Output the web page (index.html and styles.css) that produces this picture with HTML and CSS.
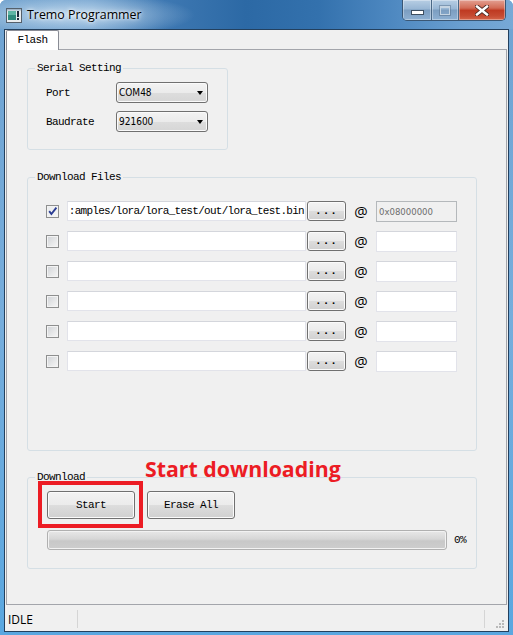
FILE: index.html
```html
<!DOCTYPE html>
<html>
<head>
<meta charset="utf-8">
<title>Tremo Programmer</title>
<link rel="stylesheet" href="styles.css">
</head>
<body>
<div class="window">
  <div class="titlebar">
    <svg class="appicon" width="16" height="15" viewBox="0 0 16 15">
      <rect x="0.5" y="0.5" width="15" height="14" fill="#e8ecef" stroke="#55606b"/>
      <rect x="2" y="3" width="8" height="9" fill="#2f8a7c"/>
      <rect x="2" y="3" width="8" height="4" fill="#5fb5a4"/>
      <rect x="11" y="3" width="2" height="6" fill="#1d2a3a"/>
      <rect x="11" y="10" width="2" height="2" fill="#1d2a3a"/>
      <rect x="1" y="1" width="14" height="1.5" fill="#9fb3c6"/>
    </svg>
    <span class="title">Tremo Programmer</span>
    <div class="caption">
      <div class="cbtn cmin"><span class="g-min"></span></div>
      <div class="cbtn cmax"><span class="g-max"></span></div>
      <div class="cbtn cclose">
        <svg width="14" height="11" viewBox="0 0 14 11">
          <path d="M2 1.5 L12 9.5 M12 1.5 L2 9.5" stroke="#4a2a25" stroke-width="4.2" stroke-linecap="square"/>
          <path d="M2 1.5 L12 9.5 M12 1.5 L2 9.5" stroke="#ffffff" stroke-width="2.4" stroke-linecap="square"/>
        </svg>
      </div>
    </div>
  </div>
  <div class="frame">
    <div class="client">
      <div class="tabs"><div class="tab">Flash</div></div>
      <div class="pane">
        <fieldset class="group serial">
          <legend>Serial Setting</legend>
          <div class="serial-body">
            <span class="lbl">Port</span>
            <div class="combo">COM48</div>
            <span class="lbl">Baudrate</span>
            <div class="combo">921600</div>
          </div>
        </fieldset>

        <fieldset class="group files">
          <legend>Download Files</legend>
          <div class="files-body">
            <div class="frow">
              <span class="chk on"><svg width="11" height="11" viewBox="0 0 11 11"><path d="M2.2 5.2 L4.4 8 L9.4 1.6" fill="none" stroke="#2b3d93" stroke-width="1.9"/></svg></span>
              <div class="field path"><span>:amples/lora/lora_test/out/lora_test.bin</span></div>
              <div class="btn dots">...</div>
              <span class="at">@</span>
              <div class="field addr disabled">0x08000000</div>
            </div>
            <div class="frow">
              <span class="chk"></span>
              <div class="field path"></div>
              <div class="btn dots">...</div>
              <span class="at">@</span>
              <div class="field addr"></div>
            </div>
            <div class="frow">
              <span class="chk"></span>
              <div class="field path"></div>
              <div class="btn dots">...</div>
              <span class="at">@</span>
              <div class="field addr"></div>
            </div>
            <div class="frow">
              <span class="chk"></span>
              <div class="field path"></div>
              <div class="btn dots">...</div>
              <span class="at">@</span>
              <div class="field addr"></div>
            </div>
            <div class="frow">
              <span class="chk"></span>
              <div class="field path"></div>
              <div class="btn dots">...</div>
              <span class="at">@</span>
              <div class="field addr"></div>
            </div>
            <div class="frow">
              <span class="chk"></span>
              <div class="field path"></div>
              <div class="btn dots">...</div>
              <span class="at">@</span>
              <div class="field addr"></div>
            </div>
          </div>
        </fieldset>

        <fieldset class="group download">
          <legend>Download</legend>
          <div class="dl-body">
            <div class="dl-buttons">
              <div class="start-wrap">
                <div class="btn big">Start</div>
                <span class="redbox"></span>
              </div>
              <div class="btn big">Erase All</div>
            </div>
            <div class="progress-row">
              <div class="progress"></div>
              <span class="pct">0%</span>
            </div>
          </div>
        </fieldset>

        <div class="annot">Start downloading</div>
      </div>
      <div class="statusbar">
        <span class="sb-idle">IDLE</span>
        <span class="sb-sep"></span>
        <span class="sb-fill"></span>
        <span class="sb-sep"></span>
        <svg class="grip" width="10" height="10" viewBox="0 0 10 10">
          <g fill="#b9b9b9">
            <rect x="7" y="1" width="2" height="2"/>
            <rect x="4" y="4" width="2" height="2"/><rect x="7" y="4" width="2" height="2"/>
            <rect x="1" y="7" width="2" height="2"/><rect x="4" y="7" width="2" height="2"/><rect x="7" y="7" width="2" height="2"/>
          </g>
        </svg>
      </div>
    </div>
  </div>
</div>
</body>
</html>
```

FILE: styles.css
```css
html, body {
  margin: 0;
  padding: 0;
}
body {
  width: 513px;
  height: 635px;
  overflow: hidden;
  background: #ffffff;
}
.window {
  width: 513px;
  height: 635px;
  display: flex;
  flex-direction: column;
  border-radius: 6px 6px 0 0;
  overflow: hidden;
  background: linear-gradient(180deg, #6fa3d2 0%, #76addc 50%, #5aa7e0 100%);
}

/* ---------- title bar ---------- */
.titlebar {
  height: 29px;
  flex: none;
  display: flex;
  align-items: flex-start;
  position: relative;
  background:
    radial-gradient(ellipse 120px 22px at 75px 15px, rgba(220, 236, 248, 0.75), rgba(220, 236, 248, 0) 100%),
    linear-gradient(90deg, #6d9fcc 0%, #6a9ccb 18%, #3e78b2 32%, #2c69a5 48%, #3371ad 62%, #4b86bf 75%, #6a9fd0 90%, #77a9d6 100%);
}
.appicon {
  margin: 8px 0 0 6px;
  flex: none;
}
.title {
  margin: 6px 0 0 5px;
  font-family: "Open Sans", "Noto Sans", sans-serif;
  font-size: 12.4px;
  line-height: 17px;
  color: #000;
  text-shadow: 0 0 6px #ffffff, 0 0 3px rgba(255, 255, 255, 0.9);
}
.caption {
  margin-left: auto;
  margin-right: 7px;
  display: flex;
  height: 20px;
  border: 1px solid #3a5775;
  border-top: none;
  border-radius: 0 0 5px 5px;
  overflow: hidden;
}
.cbtn {
  height: 20px;
  display: flex;
  align-items: center;
  justify-content: center;
  box-shadow: inset 0 0 0 1px rgba(255, 255, 255, 0.35);
}
.cmin {
  width: 28px;
  border-right: 1px solid #4a6886;
  background: linear-gradient(180deg, #b7cee4 0%, #98b6d4 45%, #7b9dc0 50%, #8eb0d2 100%);
}
.cmax {
  width: 26px;
  border-right: 1px solid #4a6886;
  background: linear-gradient(180deg, #b7cee4 0%, #98b6d4 45%, #7b9dc0 50%, #8eb0d2 100%);
}
.cclose {
  width: 46px;
  background: linear-gradient(180deg, #e3a092 0%, #d26b55 40%, #bf3a22 52%, #c64b32 80%, #d5664b 100%);
}
.g-min {
  display: block;
  width: 11px;
  height: 3px;
  margin-top: 5px;
  background: #fff;
  border: 1px solid #3d4e60;
}
.g-max {
  display: block;
  width: 8px;
  height: 6px;
  border: 1px solid #c5d4e2;
  border-top-width: 2px;
  box-shadow: 0 0 0 1px rgba(80, 105, 130, 0.45);
}

/* ---------- frame / client ---------- */
.frame {
  flex: 1;
  padding: 0 4px 3px;
  display: flex;
  flex-direction: column;
}
.client {
  flex: 1;
  border: 1px solid #23405e;
  background: #f0f0f0;
  display: flex;
  flex-direction: column;
}
.tabs {
  height: 19px;
  flex: none;
  padding-left: 1px;
  display: flex;
}
.tab {
  position: relative;
  z-index: 1;
  box-sizing: border-box;
  width: 53px;
  height: 20px;
  border: 1px solid #898c95;
  border-bottom: none;
  border-radius: 2px 2px 0 0;
  background: #ffffff;
  text-align: center;
  font-family: "Liberation Mono", "DejaVu Sans Mono", monospace;
  font-size: 11px;
  letter-spacing: -0.6px;
  line-height: 19px;
  color: #000;
}
.pane {
  position: relative;
  flex: 1;
  margin: 0 1px 1px;
  border: 1px solid #a3a5ab;
  padding: 0 0 0 20px;
  display: flex;
  flex-direction: column;
  align-items: flex-start;
}

/* ---------- group boxes ---------- */
.group {
  margin: 0;
  padding: 0 0 0 7px;
  border: 1px solid #d5dfe5;
  border-radius: 3px;
  box-sizing: border-box;
  min-inline-size: 0;
}
.group legend {
  padding: 0 2px;
  font-family: "Liberation Mono", "DejaVu Sans Mono", monospace;
  font-size: 11px;
  letter-spacing: -0.6px;
  line-height: 12px;
  color: #000;
}
.serial {
  width: 201px;
  margin-top: 12px;
}
.serial-body {
  display: grid;
  grid-template-columns: 70px 92px;
  row-gap: 8px;
  align-items: center;
  padding: 8px 0 17px 11px;
}
.lbl {
  font-family: "Liberation Mono", "DejaVu Sans Mono", monospace;
  font-size: 11px;
  letter-spacing: -0.6px;
  color: #000;
}
.combo {
  position: relative;
  box-sizing: border-box;
  height: 21px;
  border: 1px solid #707070;
  border-radius: 3px;
  background: linear-gradient(180deg, #f3f3f3 0%, #ebebeb 50%, #dddddd 51%, #d6d6d6 100%);
  box-shadow: inset 0 0 0 1px #fafafa;
  padding-left: 2px;
  font-family: "DejaVu Sans Condensed", "Liberation Sans Narrow", "Liberation Sans", sans-serif;
  font-stretch: condensed;
  font-size: 10px;
  line-height: 19px;
  color: #000;
}
.combo::after {
  content: "";
  position: absolute;
  right: 4px;
  top: 8px;
  border-top: 4px solid #000;
  border-left: 3.5px solid transparent;
  border-right: 3.5px solid transparent;
}

.files {
  width: 450px;
  margin-top: 21px;
}
.files-body {
  padding: 18px 0 79px 11px;
  display: flex;
  flex-direction: column;
  gap: 10px;
}
.frow {
  height: 20px;
  display: flex;
  align-items: center;
}
.chk {
  box-sizing: border-box;
  width: 13px;
  height: 13px;
  margin: 1px 8px 0 0;
  border: 1px solid #8e8f8f;
  background: linear-gradient(135deg, #cfd2d6 0%, #e6e7e8 55%, #f7f7f7 100%);
  box-shadow: inset 0 0 0 1px #f3f3f3;
  display: flex;
  align-items: center;
  justify-content: center;
  flex: none;
}
.chk.on {
  background: linear-gradient(135deg, #e9ebee 0%, #f6f6f6 100%);
}
.field {
  box-sizing: border-box;
  height: 20px;
  border: 1px solid #e2e3ea;
  border-top-color: #d4d6dc;
  background: #ffffff;
  flex: none;
}
.field.path {
  width: 239px;
  margin-right: 1px;
  overflow: hidden;
  display: flex;
  justify-content: flex-end;
  align-items: center;
  padding-right: 1px;
  font-family: "Liberation Mono", "DejaVu Sans Mono", monospace;
  font-size: 11px;
  letter-spacing: -0.72px;
  color: #000;
  white-space: nowrap;
}
.field.path span {
  flex: none;
}
.field.addr {
  width: 81px;
  height: 21px;
  padding-left: 2px;
  font-family: "DejaVu Sans Condensed", "Liberation Sans Narrow", "Liberation Sans", sans-serif;
  font-stretch: condensed;
  font-size: 9.5px;
  line-height: 19px;
  color: #6d6d6d;
}
.field.addr.disabled {
  background: #f0f0f0;
  border-color: #b4b8bb;
}
.btn {
  box-sizing: border-box;
  border: 1px solid #707070;
  border-radius: 3px;
  background: linear-gradient(180deg, #f3f3f3 0%, #ebebeb 50%, #dddddd 51%, #d0d0d0 100%);
  box-shadow: inset 0 0 0 1px #fbfbfb;
  text-align: center;
  color: #000;
  font-family: "Liberation Mono", "DejaVu Sans Mono", monospace;
  font-size: 11px;
  letter-spacing: -0.6px;
  flex: none;
}
.btn.dots {
  width: 39px;
  height: 20px;
  line-height: 18px;
  font-weight: bold;
  letter-spacing: 1px;
}
.at {
  width: 30px;
  text-align: center;
  font-family: "Open Sans", "Liberation Sans", sans-serif;
  font-size: 15px;
  line-height: 20px;
  color: #000;
  flex: none;
}

.download {
  width: 450px;
  margin-top: 20px;
}
.dl-body {
  padding: 8px 0 18px 12px;
  display: flex;
  flex-direction: column;
  gap: 11px;
}
.dl-buttons {
  display: flex;
  gap: 12px;
}
.start-wrap {
  position: relative;
}
.btn.big {
  width: 88px;
  height: 28px;
  line-height: 26px;
}
.redbox {
  position: absolute;
  left: -9px;
  top: -10px;
  width: 105px;
  height: 47px;
  box-sizing: border-box;
  border: 4px solid #ec1c24;
}
.progress-row {
  display: flex;
  align-items: center;
  gap: 7px;
}
.progress {
  box-sizing: border-box;
  width: 400px;
  height: 20px;
  border: 1px solid #b0b0b0;
  border-radius: 3px;
  background: linear-gradient(180deg, #e8e8e8 0%, #d6d6d6 45%, #c8c8c8 55%, #cdcdcd 100%);
  box-shadow: inset 0 0 0 1px #f2f2f2;
}
.pct {
  font-family: "Liberation Mono", "DejaVu Sans Mono", monospace;
  font-size: 11px;
  letter-spacing: -0.6px;
  color: #000;
}

.annot {
  position: absolute;
  left: 138px;
  top: 409px;
  font-family: "Open Sans", "Liberation Sans", sans-serif;
  font-weight: 700;
  font-size: 21.3px;
  line-height: 20px;
  color: #ec1c24;
  white-space: nowrap;
}

/* ---------- status bar ---------- */
.statusbar {
  height: 24px;
  flex: none;
  display: flex;
  align-items: center;
  padding-top: 1px;
}
.sb-idle {
  width: 69px;
  padding-left: 3px;
  font-family: "Open Sans", "Noto Sans", sans-serif;
  font-size: 12px;
  color: #000;
}
.sb-sep {
  width: 1px;
  height: 18px;
  background: #d5d5d5;
  flex: none;
}
.sb-fill {
  flex: 1;
}
.grip {
  margin: 10px 3px 0 10px;
  flex: none;
}
```
